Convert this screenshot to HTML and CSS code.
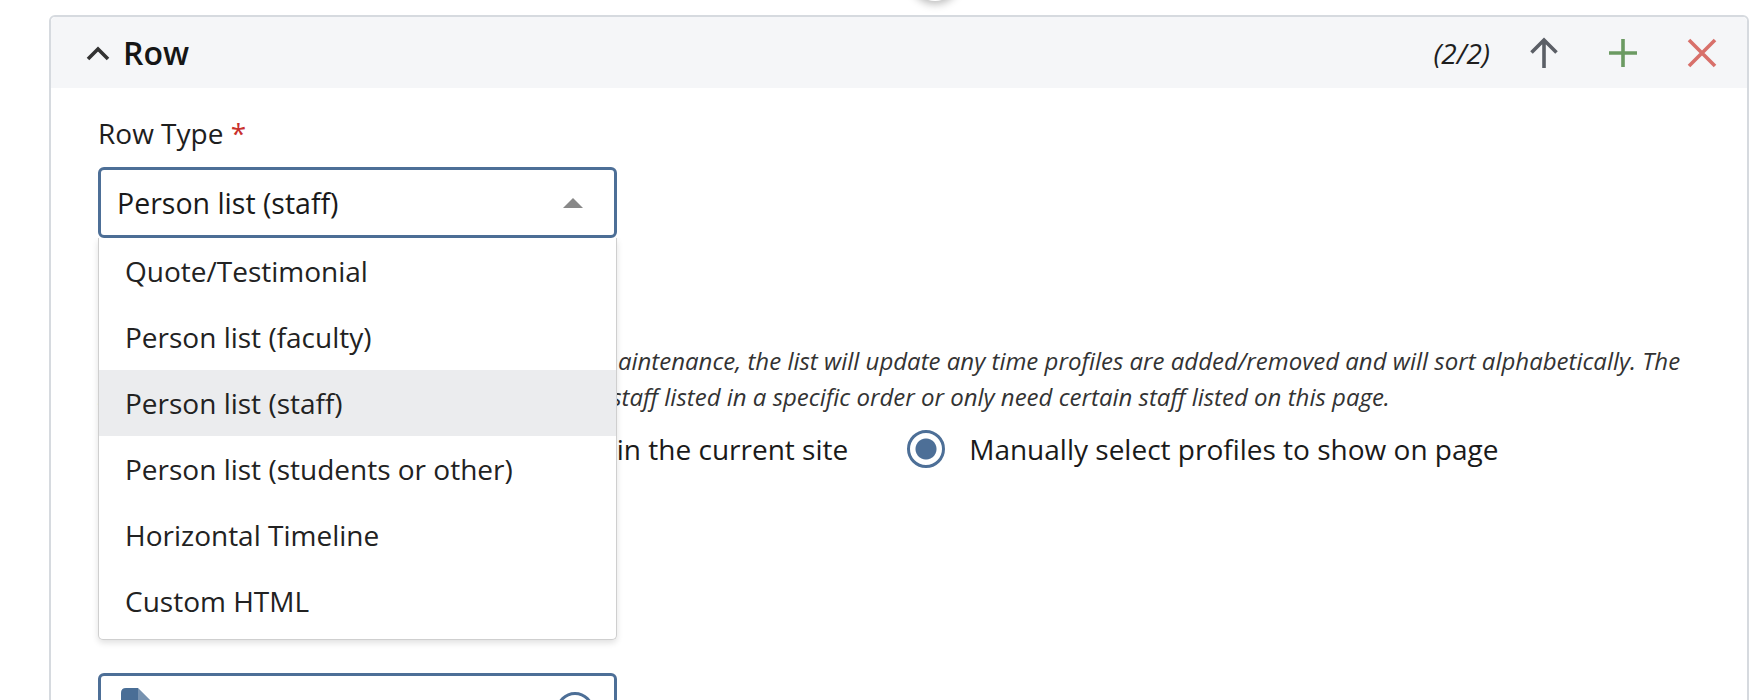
FILE: index.html
```html
<!DOCTYPE html>
<html lang="en">
<head>
<meta charset="utf-8">
<title>Row editor</title>
<link rel="stylesheet" href="styles.css">
</head>
<body>
<div class="page">
  <div class="fab-shadow"></div>
  <section class="card">
    <header class="card-header">
      <svg class="chevron" width="24" height="16" viewBox="0 0 24 16"><polyline points="2,14 12,4 22,14" fill="none" stroke="#333" stroke-width="3.6"/></svg>
      <h2 class="card-title">Row</h2>
      <div class="header-actions">
        <span class="counter">(2/2)</span>
        <svg class="act" width="32" height="32" viewBox="0 0 32 32"><path d="M16 31V3M3.5 15.5L16 3l12.5 12.5" fill="none" stroke="#5b5f66" stroke-width="3.6"/></svg>
        <svg class="act" width="32" height="32" viewBox="0 0 32 32"><path d="M16 2V30M2 16H30" fill="none" stroke="#6b9a62" stroke-width="3.6"/></svg>
        <svg class="act" width="32" height="32" viewBox="0 0 32 32"><path d="M3 3L29 29M29 3L3 29" fill="none" stroke="#d8706a" stroke-width="3.6"/></svg>
      </div>
    </header>
    <div class="card-body">
      <label class="field-label">Row Type <span class="req">*</span></label>
      <div class="select-wrap">
        <div class="select">
          <span class="select-value">Person list (staff)</span>
          <span class="caret"></span>
        </div>
        <ul class="menu">
          <li class="menu-item">Quote/Testimonial</li>
          <li class="menu-item">Person list (faculty)</li>
          <li class="menu-item active">Person list (staff)</li>
          <li class="menu-item">Person list (students or other)</li>
          <li class="menu-item">Horizontal Timeline</li>
          <li class="menu-item">Custom HTML</li>
        </ul>
      </div>
      <p class="help">Listing all staff from your current site needs no maintenance, the list will update any time profiles are added/removed and will sort alphabetically. The<br>Select the manual option if you would like to get staff listed in a specific order or only need certain staff listed on this page.</p>
      <div class="radios">
        <label class="radio"><span class="radio-dot"></span>Automatically include every profile in the current site</label>
        <label class="radio checked"><span class="radio-dot"></span>Manually select profiles to show on page</label>
      </div>
      <div class="picker">
        <svg class="file-icon" width="32" height="40" viewBox="0 0 32 40"><path d="M0 5Q0 0 5 0H17L32 15V40H0Z" fill="#4a6e96"/><path d="M17 0V15H32" fill="#ffffff" opacity="0.25"/></svg>
        <span class="picker-circle"></span>
      </div>
    </div>
  </section>
</div>
</body>
</html>
```
FILE: styles.css
```css
html, body {
  margin: 0;
  padding: 0;
  background: #ffffff;
}
body {
  font-family: "Open Sans", "Noto Sans", sans-serif;
  color: #1e1e1e;
  overflow: hidden;
}
.page {
  position: relative;
  padding: 15px 13px 0 49px;
}
.fab-shadow {
  position: absolute;
  left: 910px;
  top: -49px;
  width: 50px;
  height: 50px;
  border-radius: 50%;
  background: #ffffff;
  box-shadow: 0 3px 9px rgba(0, 0, 0, 0.28);
}
.card {
  border: 2px solid #d6dadf;
  border-radius: 6px;
  background: #ffffff;
  min-height: 760px;
}
.card-header {
  display: flex;
  align-items: center;
  height: 71px;
  padding: 0 29px 0 35px;
  background: #f5f6f8;
  border-radius: 5px 5px 0 0;
}
.chevron {
  display: block;
  margin-right: 13px;
}
.card-title {
  margin: 0;
  font-size: 32px;
  font-weight: 600;
  color: #161616;
  line-height: 40px;
}
.header-actions {
  margin-left: auto;
  display: flex;
  align-items: center;
}
.counter {
  font-style: italic;
  font-size: 28px;
  color: #1e1e1e;
  margin-right: 38px;
}
.act {
  display: block;
  margin-left: 47px;
}
.counter + .act {
  margin-left: 0;
}
.card-body {
  padding: 25px 0 0 47px;
}
.field-label {
  display: block;
  font-size: 28px;
  line-height: 40px;
  color: #1e1e1e;
}
.req {
  color: #c9302c;
}
.select-wrap {
  position: relative;
  width: 519px;
  margin-top: 14px;
}
.select {
  box-sizing: border-box;
  height: 71px;
  border: 3px solid #4d6f97;
  border-radius: 6px;
  display: flex;
  align-items: center;
  padding: 0 31px 0 16px;
}
.select-value {
  font-size: 28.5px;
  color: #1a1a1a;
}
.caret {
  margin-left: auto;
  width: 0;
  height: 0;
  border-left: 10px solid transparent;
  border-right: 10px solid transparent;
  border-bottom: 10px solid #888888;
}
.menu {
  position: absolute;
  left: 0;
  top: 71px;
  width: 519px;
  box-sizing: border-box;
  margin: 0;
  padding: 0 0 5px;
  list-style: none;
  background: #ffffff;
  border: 1px solid #cfcfcf;
  border-top: none;
  border-radius: 0 0 5px 5px;
  box-shadow: 0 3px 6px rgba(0, 0, 0, 0.12);
  z-index: 5;
}
.menu-item {
  height: 66px;
  display: flex;
  align-items: center;
  padding-left: 26px;
  font-size: 28px;
  color: #222222;
}
.menu-item.active {
  background: #ebecee;
}
.help {
  margin: 105px 0 0;
  font-size: 24px;
  line-height: 36px;
  font-style: italic;
  color: #333333;
  white-space: nowrap;
}
.radios {
  display: flex;
  align-items: center;
  gap: 59px;
  margin-top: 14px;
  height: 40px;
}
.radio {
  display: flex;
  align-items: center;
  gap: 24px;
  font-size: 28px;
  color: #1a1a1a;
}
.radio-dot {
  box-sizing: border-box;
  width: 38px;
  height: 38px;
  border-radius: 50%;
  border: 3px solid #8a8a8a;
  background: #ffffff;
}
.radio.checked .radio-dot {
  border-color: #4d6f97;
  background: radial-gradient(circle, #4d6f97 0 10px, #ffffff 11px);
}
.picker {
  box-sizing: border-box;
  width: 519px;
  height: 72px;
  margin-top: 204px;
  border: 3px solid #4d6f97;
  border-radius: 6px;
  display: flex;
  align-items: flex-start;
  padding: 12px 20px 0 20px;
}
.file-icon {
  display: block;
}
.picker-circle {
  margin-left: auto;
  margin-top: 4px;
  box-sizing: border-box;
  width: 38px;
  height: 38px;
  border-radius: 50%;
  border: 3px solid #4d6f97;
}
```
